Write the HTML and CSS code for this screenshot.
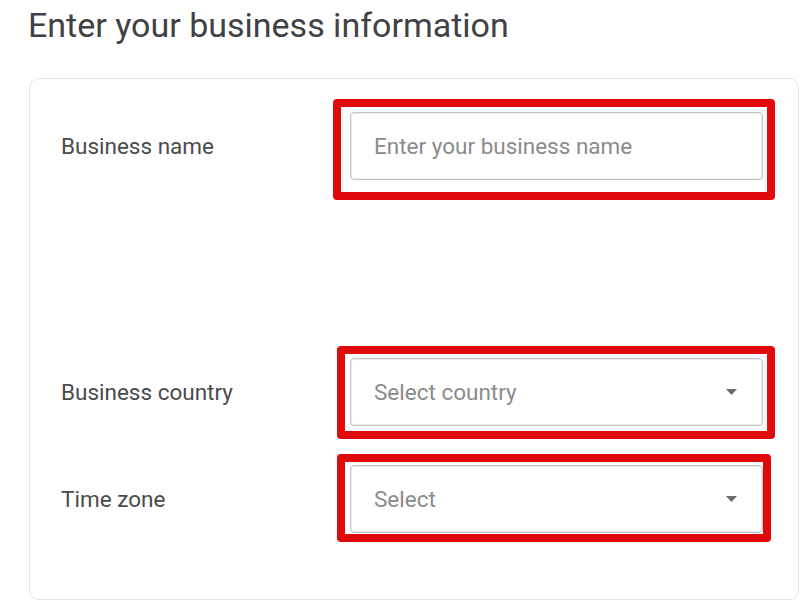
FILE: index.html
```html
<!DOCTYPE html>
<html lang="en">
<head>
<meta charset="utf-8">
<title>Enter your business information</title>
<link rel="stylesheet" href="styles.css">
</head>
<body>
<main class="page">
  <h1 class="title">Enter your business information</h1>
  <section class="card">
    <div class="row row-name">
      <div class="label">Business name</div>
      <div class="field">
        <span class="placeholder">Enter your business name</span>
        <span class="frame frame-name"></span>
      </div>
    </div>
    <div class="row row-country">
      <div class="label">Business country</div>
      <div class="field select">
        <span class="placeholder">Select country</span>
        <svg class="caret" width="11" height="6" viewBox="0 0 11 6"><path d="M0 0h11L5.5 6z" fill="#6b6b6b"/></svg>
        <span class="frame frame-country"></span>
      </div>
    </div>
    <div class="row row-zone">
      <div class="label">Time zone</div>
      <div class="field select">
        <span class="placeholder">Select</span>
        <svg class="caret" width="11" height="6" viewBox="0 0 11 6"><path d="M0 0h11L5.5 6z" fill="#6b6b6b"/></svg>
        <span class="frame frame-zone"></span>
      </div>
    </div>
  </section>
</main>
</body>
</html>
```

FILE: styles.css
```css
html, body {
  margin: 0;
  padding: 0;
  background: #ffffff;
}

.page {
  width: 810px;
  height: 612px;
  overflow: hidden;
  padding-left: 28px;
  box-sizing: border-box;
  font-family: Roboto, "Liberation Sans", sans-serif;
}

.title {
  margin: 5px 0 0 0;
  font-size: 34px;
  line-height: 40px;
  font-weight: 400;
  color: #3f4144;
  letter-spacing: 0;
}

.card {
  margin-top: 33px;
  margin-left: 1px;
  width: 770px;
  box-sizing: border-box;
  border: 1px solid #e4e4e4;
  border-radius: 10px;
  padding: 33px 34px 66px 31px;
  display: flex;
  flex-direction: column;
}

.row {
  display: flex;
  align-items: center;
  height: 68px;
}

.row-country {
  margin-top: 178px;
}

.row-zone {
  margin-top: 39px;
}

.label {
  width: 289px;
  flex: none;
  font-size: 22.5px;
  color: #4b4b4b;
}

.field {
  position: relative;
  width: 413px;
  height: 68px;
  box-sizing: border-box;
  border: 1px solid #c4c4c4;
  border-radius: 4px;
  display: flex;
  align-items: center;
  padding: 0 25px 0 23px;
  box-shadow: inset 0 0 0 1px #ececec;
}

.placeholder {
  flex: 1;
  font-size: 22.5px;
  color: #8b8b8b;
}

.caret {
  flex: none;
  display: block;
}

.frame {
  position: absolute;
  border: 8px solid #e10a0a;
  border-radius: 4px;
  pointer-events: none;
}

.frame-name {
  top: -14px;
  left: -18px;
  right: -13px;
  bottom: -21px;
}

.frame-country {
  top: -13px;
  left: -14px;
  right: -13px;
  bottom: -14px;
}

.frame-zone {
  top: -12px;
  left: -14px;
  right: -9px;
  bottom: -10px;
}
```
